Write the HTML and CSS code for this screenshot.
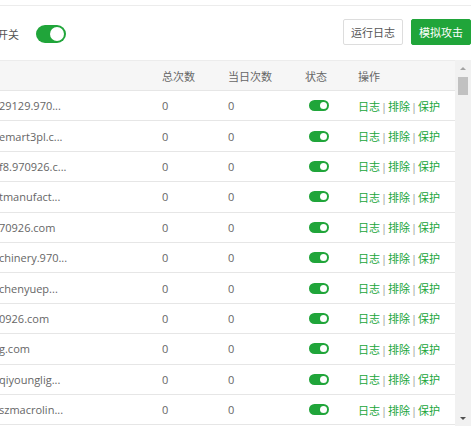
FILE: index.html
```html
<!DOCTYPE html>
<html>
<head>
<meta charset="utf-8">
<link rel="stylesheet" href="styles.css">
</head>
<body>
<div class="page">
  <div class="topbar"></div>
  <div class="toolbar">
    <div class="switch-group">
      <span class="label">开关</span>
      <span class="switch"><span class="knob"></span></span>
    </div>
    <div class="actions">
      <button class="btn btn-default">运行日志</button>
      <button class="btn btn-primary">模拟攻击</button>
    </div>
  </div>
  <div class="table-wrap">
    <div class="table">
      <div class="row head">
        <div class="c-domain"></div>
        <div>总次数</div>
        <div>当日次数</div>
        <div>状态</div>
        <div>操作</div>
      </div>
      <div class="row"><div class="c-domain">29129.970...</div><div>0</div><div>0</div><div class="c-status"><span class="mini"><span class="mknob"></span></span></div><div class="ops"><a>日志</a><span class="sep">|</span><a>排除</a><span class="sep">|</span><a>保护</a></div></div>
      <div class="row"><div class="c-domain">emart3pl.c...</div><div>0</div><div>0</div><div class="c-status"><span class="mini"><span class="mknob"></span></span></div><div class="ops"><a>日志</a><span class="sep">|</span><a>排除</a><span class="sep">|</span><a>保护</a></div></div>
      <div class="row"><div class="c-domain">f8.970926.c...</div><div>0</div><div>0</div><div class="c-status"><span class="mini"><span class="mknob"></span></span></div><div class="ops"><a>日志</a><span class="sep">|</span><a>排除</a><span class="sep">|</span><a>保护</a></div></div>
      <div class="row"><div class="c-domain">tmanufact...</div><div>0</div><div>0</div><div class="c-status"><span class="mini"><span class="mknob"></span></span></div><div class="ops"><a>日志</a><span class="sep">|</span><a>排除</a><span class="sep">|</span><a>保护</a></div></div>
      <div class="row"><div class="c-domain">70926.com</div><div>0</div><div>0</div><div class="c-status"><span class="mini"><span class="mknob"></span></span></div><div class="ops"><a>日志</a><span class="sep">|</span><a>排除</a><span class="sep">|</span><a>保护</a></div></div>
      <div class="row"><div class="c-domain">chinery.970...</div><div>0</div><div>0</div><div class="c-status"><span class="mini"><span class="mknob"></span></span></div><div class="ops"><a>日志</a><span class="sep">|</span><a>排除</a><span class="sep">|</span><a>保护</a></div></div>
      <div class="row"><div class="c-domain">chenyuep...</div><div>0</div><div>0</div><div class="c-status"><span class="mini"><span class="mknob"></span></span></div><div class="ops"><a>日志</a><span class="sep">|</span><a>排除</a><span class="sep">|</span><a>保护</a></div></div>
      <div class="row"><div class="c-domain">0926.com</div><div>0</div><div>0</div><div class="c-status"><span class="mini"><span class="mknob"></span></span></div><div class="ops"><a>日志</a><span class="sep">|</span><a>排除</a><span class="sep">|</span><a>保护</a></div></div>
      <div class="row"><div class="c-domain">g.com</div><div>0</div><div>0</div><div class="c-status"><span class="mini"><span class="mknob"></span></span></div><div class="ops"><a>日志</a><span class="sep">|</span><a>排除</a><span class="sep">|</span><a>保护</a></div></div>
      <div class="row"><div class="c-domain">qiyounglig...</div><div>0</div><div>0</div><div class="c-status"><span class="mini"><span class="mknob"></span></span></div><div class="ops"><a>日志</a><span class="sep">|</span><a>排除</a><span class="sep">|</span><a>保护</a></div></div>
      <div class="row"><div class="c-domain">szmacrolin...</div><div>0</div><div>0</div><div class="c-status"><span class="mini"><span class="mknob"></span></span></div><div class="ops"><a>日志</a><span class="sep">|</span><a>排除</a><span class="sep">|</span><a>保护</a></div></div>
    </div>
    <div class="scrollbar">
      <div class="sb-btn"><span class="arrow-up"></span></div>
      <div class="thumb"></div>
      <div class="sb-space"></div>
      <div class="sb-btn"><span class="arrow-down"></span></div>
    </div>
  </div>
</div>
</body>
</html>
```

FILE: styles.css
```css
html, body {
  margin: 0;
  padding: 0;
}
body {
  width: 474px;
  height: 448px;
  overflow: hidden;
  background: #fff;
  font-family: "Open Sans", "Noto Sans CJK SC", sans-serif;
  font-size: 11px;
  color: #666;
}
.page {
  width: 471px;
}
.topbar {
  height: 5px;
  border-bottom: 1px solid #ececec;
}
.toolbar {
  height: 54px;
  display: flex;
  align-items: center;
  justify-content: space-between;
}
.switch-group {
  display: flex;
  align-items: center;
  padding-top: 2px;
}
.label {
  margin-left: -3px;
  margin-right: 17px;
  color: #555;
  font-size: 11px;
}
.switch {
  width: 30px;
  height: 18px;
  border-radius: 9px;
  background: #20a53a;
  display: flex;
  justify-content: flex-end;
  align-items: center;
  padding: 0 2px;
  box-sizing: border-box;
}
.knob {
  width: 14px;
  height: 14px;
  border-radius: 50%;
  background: #fff;
}
.actions {
  display: flex;
  gap: 8px;
  margin-top: -3px;
}
.btn {
  width: 60px;
  height: 26px;
  padding: 0;
  font-family: inherit;
  font-size: 11px;
  border-radius: 2px;
  cursor: pointer;
}
.btn-default {
  background: #fff;
  border: 1px solid #ddd;
  color: #555;
}
.btn-primary {
  background: #20a53a;
  border: 1px solid #20a53a;
  color: #fff;
}
.table-wrap {
  display: flex;
  height: 366px;
}
.table {
  flex: 1;
}
.row {
  display: grid;
  grid-template-columns: 162px 66px 77px 53px 1fr;
  align-items: center;
  height: 30.4px;
  box-sizing: border-box;
  border-bottom: 1px solid #e6e6e6;
}
.row.head {
  height: 31px;
  background: #f6f6f6;
  border-top: 1px solid #ececec;
  border-bottom: 1px solid #e6e6e6;
}
.c-domain {
  margin-left: -1px;
  white-space: nowrap;
  overflow: hidden;
}
.c-status {
  display: flex;
  padding-left: 4px;
}
.mini {
  width: 20px;
  height: 11px;
  border-radius: 6px;
  background: #20a53a;
  display: flex;
  justify-content: flex-end;
  align-items: center;
  padding: 0 2px;
  box-sizing: border-box;
}
.mknob {
  width: 7px;
  height: 7px;
  border-radius: 50%;
  background: #fff;
}
.ops {
  white-space: nowrap;
}
.ops a {
  color: #20a53a;
  text-decoration: none;
}
.sep {
  color: #999;
  margin: 0 1px;
}
.scrollbar {
  width: 16px;
  background: #f1f1f1;
  display: flex;
  flex-direction: column;
  align-items: center;
}
.sb-btn {
  height: 16px;
  width: 16px;
  display: flex;
  align-items: center;
  justify-content: center;
}
.arrow-up {
  width: 0;
  height: 0;
  border-left: 3px solid transparent;
  border-right: 3px solid transparent;
  border-bottom: 3px solid #a3a3a3;
}
.arrow-down {
  width: 0;
  height: 0;
  border-left: 3px solid transparent;
  border-right: 3px solid transparent;
  border-top: 3px solid #505050;
}
.thumb {
  width: 10px;
  height: 18px;
  background: #c1c1c1;
  margin-top: 1px;
}
.sb-space {
  flex: 1;
}
```
